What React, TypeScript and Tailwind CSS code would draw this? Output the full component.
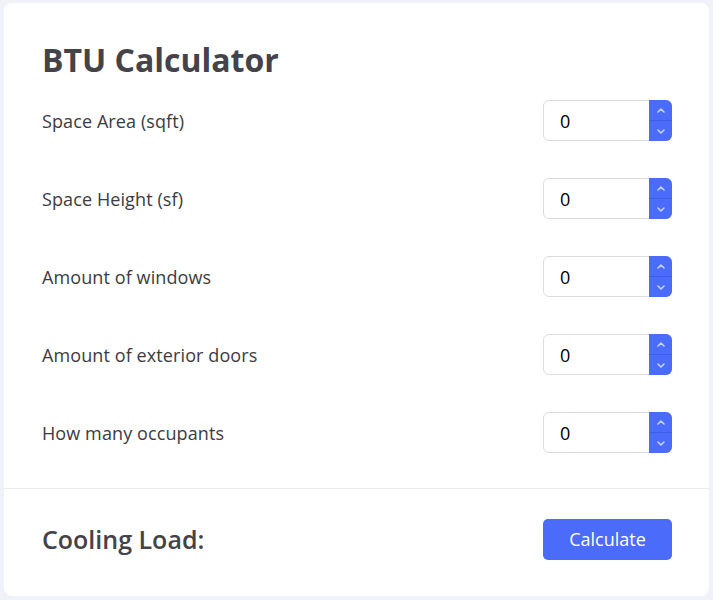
import React from "react";

const fields = [
  "Space Area (sqft)",
  "Space Height (sf)",
  "Amount of windows",
  "Amount of exterior doors",
  "How many occupants",
];

function Spin() {
  return (
    <div className="flex flex-col w-[23px] h-full bg-[#4b6bfb] rounded-r-[6px] overflow-hidden">
      <div className="flex-1 flex items-center justify-center border-b border-[#3f5ee8]">
        <svg width="8" height="5" viewBox="0 0 8 5" fill="none">
          <path d="M1 4 L4 1 L7 4" stroke="#c9d3ff" strokeWidth="1.5" strokeLinecap="round" strokeLinejoin="round" />
        </svg>
      </div>
      <div className="flex-1 flex items-center justify-center">
        <svg width="8" height="5" viewBox="0 0 8 5" fill="none">
          <path d="M1 1 L4 4 L7 1" stroke="#c9d3ff" strokeWidth="1.5" strokeLinecap="round" strokeLinejoin="round" />
        </svg>
      </div>
    </div>
  );
}

export default function App() {
  return (
    <div className="min-h-screen bg-[#f1f2f8] pt-[3px] pl-[4px]" style={{ fontFamily: '"Open Sans", sans-serif' }}>
      <div className="w-[705px] h-[593px] bg-white rounded-[8px] flex flex-col">
        <div className="px-[38px] pt-[37px] pb-[35px]">
          <h1 className="text-[32px] leading-[40px] font-bold text-[#434349]">BTU Calculator</h1>
          <div className="mt-[20px] flex flex-col gap-[37px]">
            {fields.map((f) => (
              <div key={f} className="flex items-center justify-between h-[41px]">
                <span className="text-[18px] tracking-[0.1px] text-[#3b3b42] pt-[2px]">{f}</span>
                <div className="flex w-[129px] h-[41px] border border-[#dcdce0] rounded-[6px] bg-white mr-[-1px]">
                  <div className="flex-1 flex items-center pl-[16px] pt-[1px] text-[18px] text-black">0</div>
                  <div className="-my-px -mr-px">
                    <div className="h-[41px]">
                      <Spin />
                    </div>
                  </div>
                </div>
              </div>
            ))}
          </div>
        </div>
        <div className="border-t border-[#ebebee] pl-[38px] pr-[37px] pt-[30px] flex items-center justify-between">
          <span className="text-[25px] font-semibold text-[#434349]">Cooling Load:</span>
          <button className="w-[129px] h-[41px] rounded-[5px] bg-[#4b6bfb] text-white text-[18px]">Calculate</button>
        </div>
      </div>
    </div>
  );
}
